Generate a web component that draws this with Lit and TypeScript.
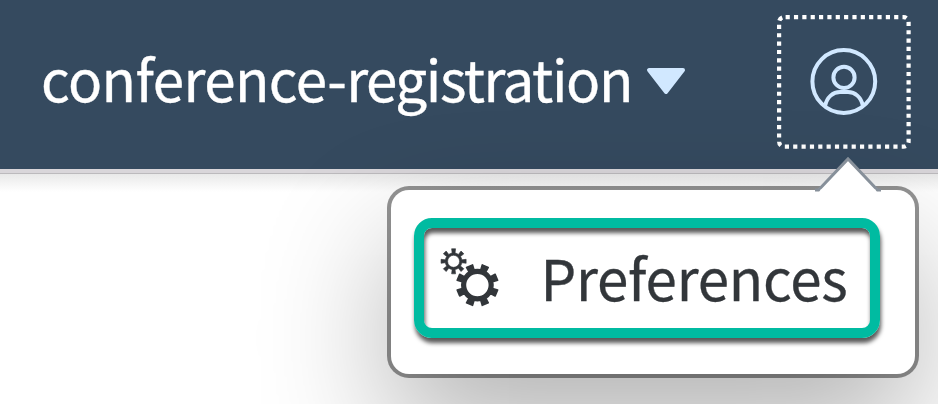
import { LitElement, html, css, svg } from "lit";
import { customElement } from "lit/decorators.js";

/** Outline of a cog: a ring with evenly spaced flared teeth. */
function cog(cx: number, cy: number, outer: number, ring: number, hole: number, half: number, start: number) {
  const pt = (r: number, deg: number) => {
    const a = (deg * Math.PI) / 180;
    return `${(cx + r * Math.cos(a)).toFixed(2)} ${(cy + r * Math.sin(a)).toFixed(2)}`;
  };
  const parts: string[] = [];
  for (let i = 0; i < 8; i++) {
    const a = start + i * 45;
    const base = half * 1.12;
    parts.push(`${i ? "L" : "M"}${pt(ring, a - base)}L${pt(outer, a - half)}L${pt(outer, a + half)}L${pt(ring, a + base)}`);
    parts.push(`A${ring} ${ring} 0 0 1 ${pt(ring, a + 45 - base)}`);
  }
  return `${parts.join("")}ZM${cx + hole} ${cy}A${hole} ${hole} 0 1 0 ${cx - hole} ${cy}A${hole} ${hole} 0 1 0 ${cx + hole} ${cy}Z`;
}

@customElement("shell-header")
class ShellHeader extends LitElement {
  static styles = css`
    :host { display: flex; box-sizing: border-box; height: 169px; padding: 0 26px 0 41px; background: #354a5f; color: #fff; }
    .title { display: flex; align-items: center; flex: 1; height: 162px; }
    .name { width: 590px; white-space: nowrap; font-size: 56.5px; line-height: 80px; margin-top: -8px; -webkit-text-stroke: 0.35px currentColor; }
    .first { letter-spacing: -0.55px; }
    .second { letter-spacing: -1.42px; }
    .arrow { display: block; margin-left: 15px; width: 40px; height: 28px; }
    .avatar { display: block; width: 136px; height: 138px; margin-top: 13px; }
  `;
  render() {
    return html`
      <div class="title">
        <div class="name"><span class="first">conference-</span><span class="second">registration</span></div>
        <svg class="arrow" viewBox="0 0 40 28">
          <path d="M3 3H37L20 25Z" fill="#d1e8ff" stroke="#d1e8ff" stroke-width="4" stroke-linejoin="round" />
        </svg>
      </div>
      <svg class="avatar" viewBox="776 13 136 138" fill="none">
        <rect x="779.1" y="17.2" width="129.5" height="129.5" rx="5" stroke="#fff" stroke-width="4.2" stroke-dasharray="4.18 4.17" stroke-dashoffset="-1.5" />
        <g stroke="#d1e8ff" stroke-width="4">
          <circle cx="843.8" cy="81.5" r="31.4" />
          <circle cx="844" cy="77.4" r="10.6" />
          <path d="M825 106C827 97 833 92 840 92H848C855 92 861 97 863 106" />
        </g>
      </svg>
    `;
  }
}

@customElement("user-menu")
class UserMenu extends LitElement {
  static styles = css`
    :host {
      display: block; box-sizing: border-box; width: 524px; height: 184px; padding: 28px 35px 36px 23px;
      border-radius: 18px; background: #fff; color: #32363a;
      box-shadow: 0 0 0 4px rgba(0, 0, 0, 0.42), 0 56px 130px rgba(0, 0, 0, 0.31);
    }
    .tip { position: absolute; left: 424px; top: -35px; width: 66px; height: 37px; }
    .item {
      display: flex; align-items: center; box-sizing: border-box; height: 120px;
      border: 10px solid #00bba1; border-radius: 18px; padding-left: 16px;
      box-shadow: 1px 5px 4px rgba(0, 0, 0, 0.65), inset 1px 5px 4px rgba(0, 0, 0, 0.65);
    }
    .cogs { flex: none; width: 60px; height: 60px; }
    .text { margin-left: 40.5px; margin-top: -4px; font-size: 56.5px; letter-spacing: -0.25px; line-height: 80px; white-space: nowrap; -webkit-text-stroke: 0.3px currentColor; }
  `;
  render() {
    return html`
      <svg class="tip" viewBox="815 155 66 37">
        <path d="M817 192V190L848 159L879 190V192Z" fill="#fff" />
        <path d="M815 190H818.5L848 159L877.5 190H881" fill="none" stroke="#87909a" stroke-width="3" />
        <path d="M820.5 189.5H875.5V192H820.5Z" fill="#fff" />
      </svg>
      <div class="item">
        <svg class="cogs" viewBox="440 248 60 60" fill="#32363a" stroke="#32363a" stroke-linejoin="round">
          ${svg`<path fill-rule="evenodd" stroke-width="0.6" d=${cog(453.6, 261.3, 12.7, 8.4, 6, 9, 0)} />
          <path fill-rule="evenodd" stroke-width="1.6" d=${cog(477.4, 285.1, 20.8, 15.6, 12, 9, 22.5)} />`}
        </svg>
        <div class="text">Preferences</div>
      </div>
    `;
  }
}

@customElement("app-root")
class AppRoot extends LitElement {
  static styles = css`
    :host {
      display: block; position: relative; height: 404px; overflow: hidden; background: #fff;
      font-family: "Noto Sans CJK SC", "Open Sans", sans-serif;
    }
    .rule { box-sizing: border-box; height: 5px; background: #d9d6da; border-bottom: 1px solid #bcbabd; }
    .fade { height: 18px; background: linear-gradient(#e9e9e9, #fff); }
    .menu { position: absolute; left: 391px; top: 190px; }
  `;
  render() {
    return html`
      <shell-header></shell-header>
      <div class="rule"></div>
      <div class="fade"></div>
      <user-menu class="menu"></user-menu>
    `;
  }
}
